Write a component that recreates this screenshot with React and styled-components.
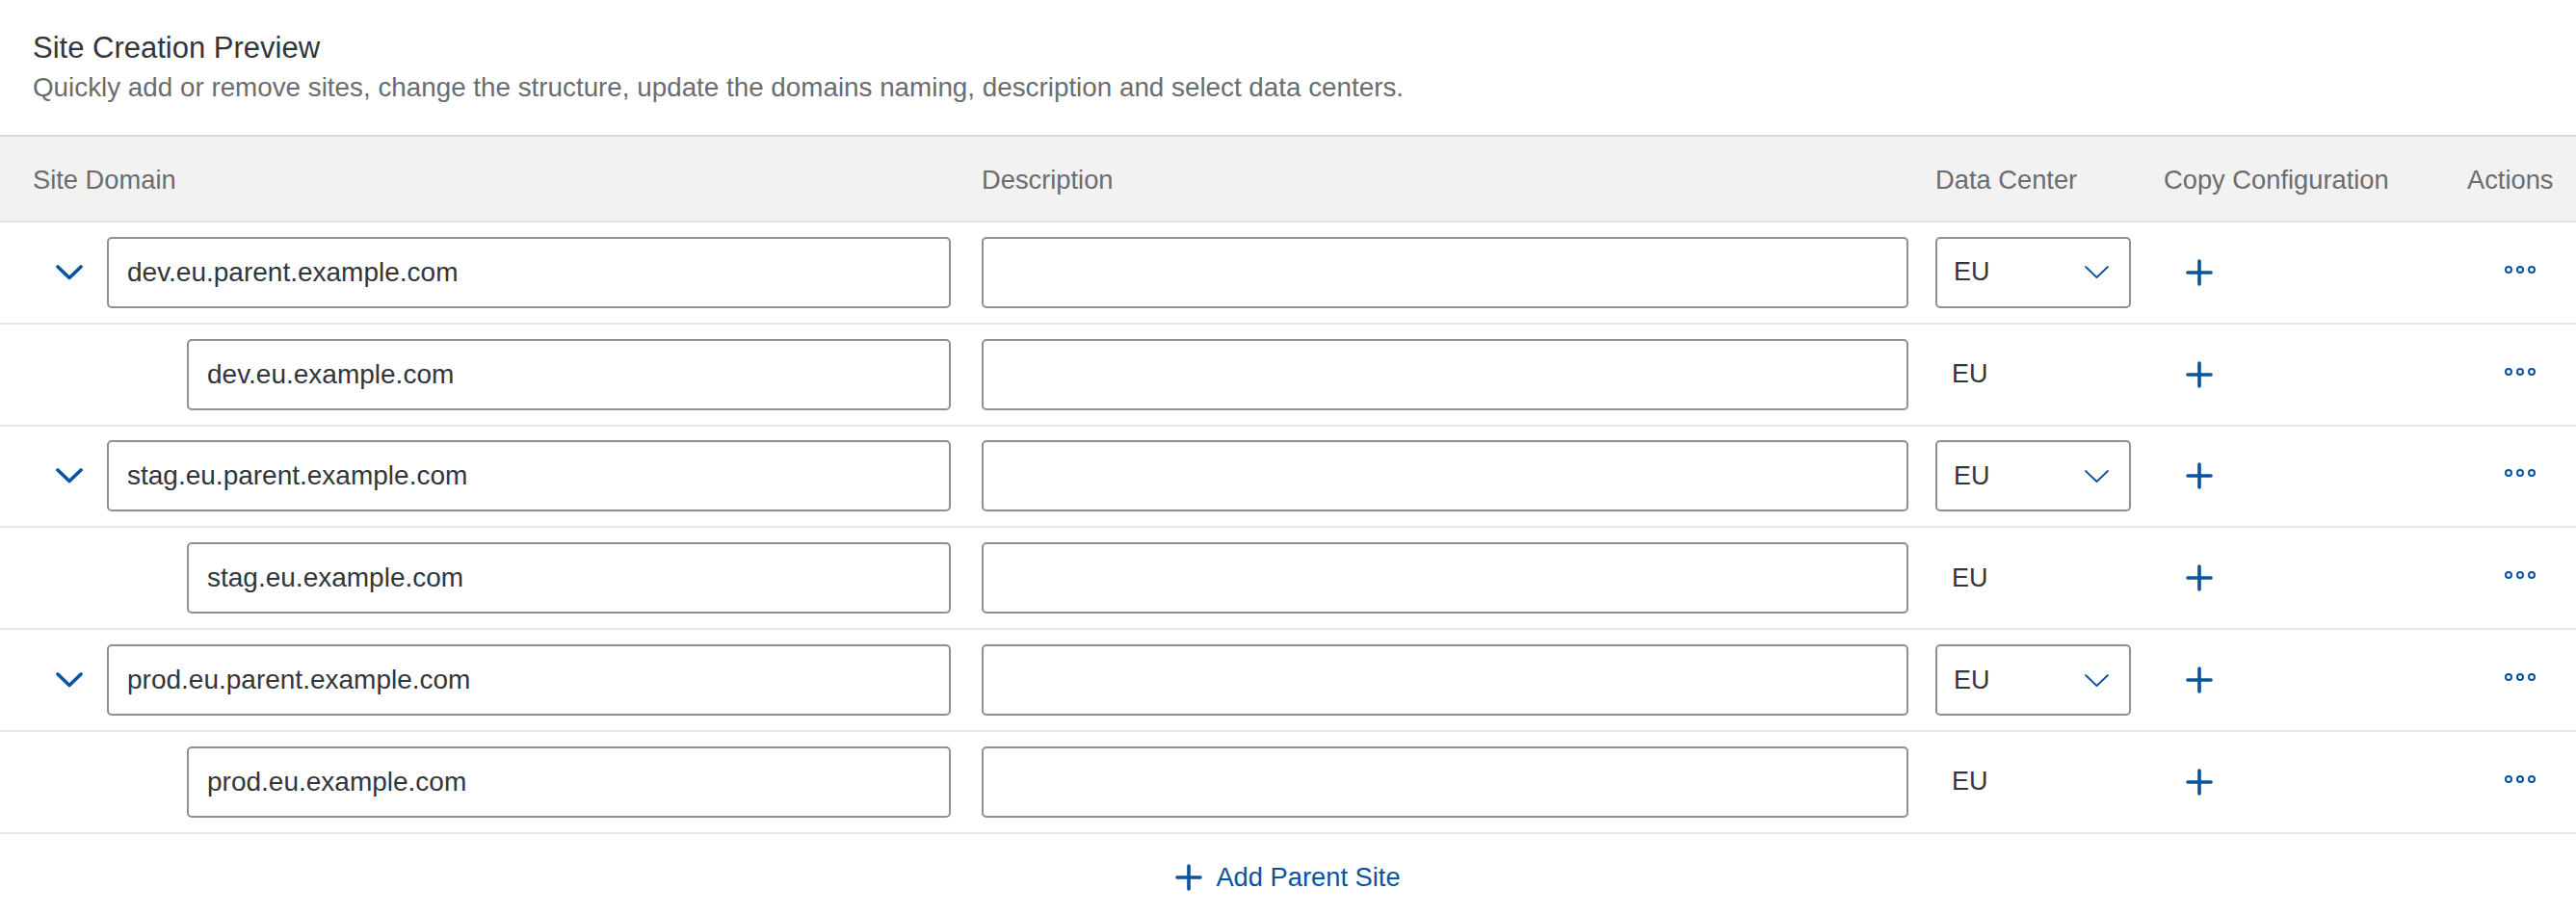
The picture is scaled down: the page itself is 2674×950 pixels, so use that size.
import styled, { createGlobalStyle } from "styled-components";

const GlobalStyle = createGlobalStyle`
  body {
    margin: 0;
    background: #ffffff;
    font-family: "Liberation Sans", Arial, sans-serif;
    color: #32363a;
  }
`;

const BLUE = "#0854a0";

const sites = [
  { parent: "dev.eu.parent.example.com", child: "dev.eu.example.com" },
  { parent: "stag.eu.parent.example.com", child: "stag.eu.example.com" },
  { parent: "prod.eu.parent.example.com", child: "prod.eu.example.com" },
];

const Page = styled.div`
  width: 100%;
`;

const Intro = styled.div`
  padding: 30px 34px 31px 34px;
`;

const Title = styled.h2`
  margin: 0;
  font-size: 31px;
  line-height: 40px;
  font-weight: normal;
  color: #32363a;
`;

const Subtitle = styled.p`
  margin: 3px 0 0 0;
  font-size: 27.8px;
  line-height: 36px;
  color: #6a6d70;
`;

const Grid = styled.div`
  display: grid;
  grid-template-columns: 985px 990px 237px 315px 1fr;
  align-items: center;
  padding-left: 34px;
  box-sizing: border-box;
`;

const HeaderRow = styled(Grid)`
  height: 91px;
  background: #f2f2f2;
  border-top: 2px solid #d9d9d9;
  border-bottom: 2px solid #e5e5e5;
`;

const HeaderCell = styled.div`
  font-size: 27.3px;
  color: #6a6d70;
  white-space: nowrap;
  padding-top: 2px;
`;

const Row = styled(Grid)`
  height: 105.8px;
  border-bottom: 2px solid #e5e5e5;
`;

const DomainCell = styled.div`
  display: flex;
  align-items: center;
  padding-left: ${(p) => (p.$child ? "160px" : "24px")};
  gap: 25px;
`;

const ExpandButton = styled.button`
  display: flex;
  align-items: center;
  justify-content: center;
  width: 28px;
  height: 40px;
  padding: 0;
  border: none;
  background: none;
  cursor: pointer;
`;

const TextInput = styled.input`
  box-sizing: border-box;
  width: ${(p) => p.$width}px;
  height: 74px;
  padding: 0 19px;
  border: 2px solid #89919a;
  border-radius: 5px;
  background: #ffffff;
  font-family: inherit;
  font-size: 28px;
  color: #32363a;
  outline: none;
`;

const Select = styled.div`
  box-sizing: border-box;
  width: 203px;
  height: 74px;
  display: flex;
  align-items: center;
  justify-content: space-between;
  padding: 0 21px 0 17px;
  border: 2px solid #89919a;
  border-radius: 5px;
  font-size: 27px;
  color: #32363a;
  cursor: pointer;
`;

const PlainValue = styled.div`
  padding-left: 17px;
  font-size: 27px;
  color: #32363a;
`;

const IconButton = styled.button`
  display: flex;
  align-items: center;
  padding: 0;
  margin-left: ${(p) => p.$offset}px;
  margin-bottom: ${(p) => p.$lift || 0}px;
  border: none;
  background: none;
  cursor: pointer;
`;

const Footer = styled.div`
  height: 84px;
  display: flex;
  justify-content: center;
  align-items: center;
  padding-top: 6px;
  box-sizing: border-box;
`;

const AddButton = styled.button`
  display: flex;
  align-items: center;
  gap: 14px;
  padding: 0;
  border: none;
  background: none;
  font-family: inherit;
  font-size: 27.3px;
  color: ${BLUE};
  cursor: pointer;
`;

function Chevron() {
  return (
    <svg width="28" height="16" viewBox="0 0 28 16">
      <polyline
        points="2,2 14,13.5 26,2"
        fill="none"
        stroke={BLUE}
        strokeWidth="3.6"
        strokeLinecap="round"
        strokeLinejoin="round"
      />
    </svg>
  );
}

function SlimChevron() {
  return (
    <svg width="25" height="13" viewBox="0 0 25 13">
      <polyline
        points="1,1 12.5,12 24,1"
        fill="none"
        stroke={BLUE}
        strokeWidth="1.8"
        strokeLinecap="round"
        strokeLinejoin="round"
      />
    </svg>
  );
}

function PlusIcon() {
  return (
    <svg width="28" height="28" viewBox="0 0 28 28">
      <path
        d="M14 2 V26 M2 14 H26"
        fill="none"
        stroke={BLUE}
        strokeWidth="3.6"
        strokeLinecap="round"
      />
    </svg>
  );
}

function OverflowIcon() {
  return (
    <svg width="32" height="8" viewBox="0 0 32 8">
      {[4, 16, 28].map((cx) => (
        <circle key={cx} cx={cx} cy="4" r="3" fill="none" stroke={BLUE} strokeWidth="2" />
      ))}
    </svg>
  );
}

function SiteRow({ domain, child }) {
  return (
    <Row>
      <DomainCell $child={child}>
        {!child && (
          <ExpandButton aria-label="Collapse">
            <Chevron />
          </ExpandButton>
        )}
        <TextInput $width={child ? 793 : 876} defaultValue={domain} />
      </DomainCell>
      <div>
        <TextInput $width={962} defaultValue="" />
      </div>
      <div>
        {child ? (
          <PlainValue>EU</PlainValue>
        ) : (
          <Select>
            <span>EU</span>
            <SlimChevron />
          </Select>
        )}
      </div>
      <div>
        <IconButton $offset={23} aria-label="Copy configuration">
          <PlusIcon />
        </IconButton>
      </div>
      <div>
        <IconButton $offset={39} $lift={6} aria-label="More actions">
          <OverflowIcon />
        </IconButton>
      </div>
    </Row>
  );
}

export default function App() {
  return (
    <Page>
      <GlobalStyle />
      <Intro>
        <Title>Site Creation Preview</Title>
        <Subtitle>
          Quickly add or remove sites, change the structure, update the domains naming,
          description and select data centers.
        </Subtitle>
      </Intro>
      <HeaderRow>
        <HeaderCell>Site Domain</HeaderCell>
        <HeaderCell>Description</HeaderCell>
        <HeaderCell>Data Center</HeaderCell>
        <HeaderCell>Copy Configuration</HeaderCell>
        <HeaderCell>Actions</HeaderCell>
      </HeaderRow>
      {sites.map((site) => (
        <div key={site.parent}>
          <SiteRow domain={site.parent} />
          <SiteRow domain={site.child} child />
        </div>
      ))}
      <Footer>
        <AddButton>
          <PlusIcon />
          Add Parent Site
        </AddButton>
      </Footer>
    </Page>
  );
}
